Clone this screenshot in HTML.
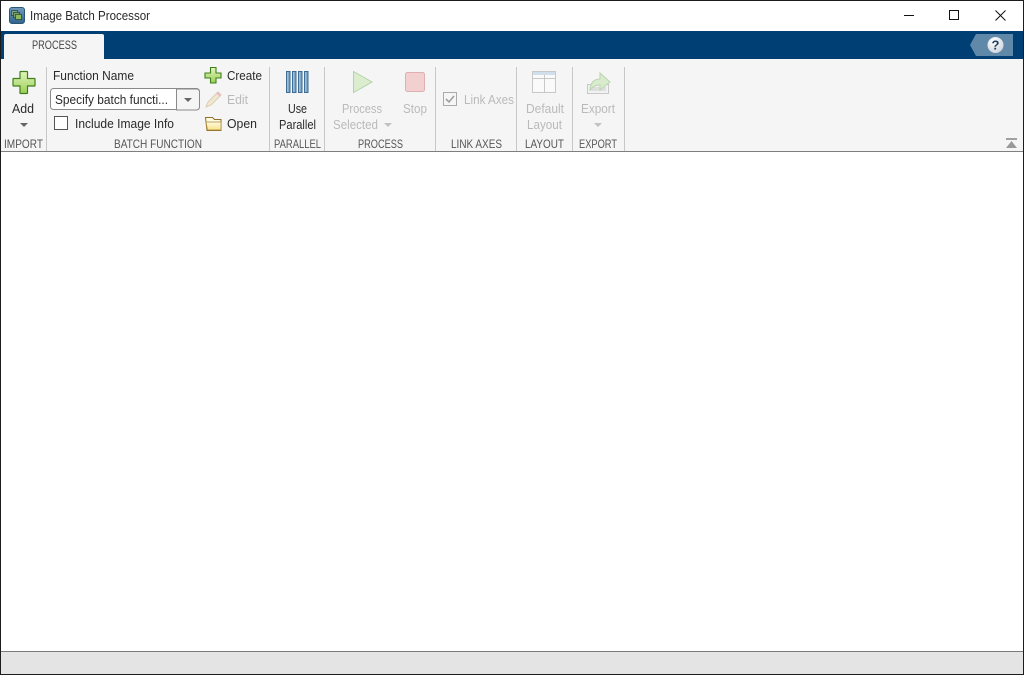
<!DOCTYPE html>
<html><head><meta charset="utf-8"><title>Image Batch Processor</title>
<style>
html,body{margin:0;padding:0;background:#fff;width:1024px;height:675px;overflow:hidden}
svg{display:block}
text{font-family:"Liberation Sans",sans-serif;font-size:12.5px;fill:#2a2a2a}
.d{fill:#bababa}
.g{fill:#555;font-size:12px}
</style></head><body>
<svg width="1024" height="675" viewBox="0 0 1024 675" xmlns="http://www.w3.org/2000/svg">
<defs>
<linearGradient id="gr" x1="0" y1="0" x2="0" y2="1"><stop offset="0" stop-color="#e2f4bd"/><stop offset="1" stop-color="#9ccf55"/></linearGradient>
<linearGradient id="bl" x1="0" y1="0" x2="1" y2="0"><stop offset="0" stop-color="#b4d0e6"/><stop offset="1" stop-color="#5d8fb8"/></linearGradient>
<linearGradient id="fo" x1="0" y1="0" x2="0" y2="1"><stop offset="0" stop-color="#fffbe0"/><stop offset="1" stop-color="#f8e28a"/></linearGradient>
<linearGradient id="ti" x1="0" y1="0" x2="0" y2="1"><stop offset="0" stop-color="#6f9bbd"/><stop offset="1" stop-color="#2f638c"/></linearGradient>
<radialGradient id="hp" cx=".4" cy=".3" r=".8"><stop offset="0" stop-color="#fff"/><stop offset="1" stop-color="#c9d2dc"/></radialGradient>
</defs>
<rect width="1024" height="675" fill="#fff"/>
<rect x="1" y="31" width="1022" height="28" fill="#003f73"/>
<path d="M4 36a2 2 0 0 1 2-2h96a2 2 0 0 1 2 2v23H4z" fill="#f5f5f5"/>
<rect x="1" y="59" width="1022" height="92" fill="#f5f5f5"/>
<rect x="1" y="151" width="1022" height="1" fill="#7f7f7f"/>
<rect x="1" y="652" width="1022" height="22" fill="#e4e4e4"/>
<rect x="1" y="651" width="1022" height="1" fill="#7a7a7a"/>
<rect x="0" y="0" width="1024" height="1" fill="#1c1c1c"/>
<rect x="0" y="0" width="1" height="675" fill="#1c1c1c"/>
<rect x="1023" y="0" width="1" height="675" fill="#1c1c1c"/>
<rect x="0" y="674" width="1024" height="1" fill="#1c1c1c"/>

<!-- title icon -->
<rect x="9.500" y="7.500" width="15" height="16" rx="2.500" fill="url(#ti)" stroke="#2a5576"/>
<rect x="11.500" y="10.500" width="6" height="5" fill="#7ea58f" stroke="#23402f" stroke-width=".7"/>
<rect x="13.500" y="12.500" width="6" height="5" fill="#7e9f6a" stroke="#23402f" stroke-width=".7"/>
<rect x="15.500" y="14.500" width="6" height="5" fill="#8fb85a" stroke="#23402f" stroke-width=".7"/>
<text x="30" y="20" textLength="120" lengthAdjust="spacingAndGlyphs" fill="#111">Image Batch Processor</text>

<!-- window controls -->
<rect x="904" y="15" width="10" height="1" fill="#111"/>
<rect x="949.500" y="10.500" width="9" height="9" fill="none" stroke="#111"/>
<path d="M995.500 10.500l10 10M1005.500 10.500l-10 10" stroke="#111" stroke-width="1" fill="none"/>

<!-- help -->
<path d="M976 34H1013V56H976L970 45z" fill="#6089a9"/>
<circle cx="995.500" cy="45" r="8" fill="url(#hp)"/>
<text x="995.500" y="49.500" text-anchor="middle" style="font-size:13px;font-weight:bold;fill:#1f3f60">?</text>

<text x="32" y="49" textLength="45" lengthAdjust="spacingAndGlyphs" style="font-size:12px;fill:#444">PROCESS</text>

<g fill="#c8c8c8">
<rect x="46" y="67" width="1" height="84"/><rect x="269" y="67" width="1" height="84"/><rect x="324" y="67" width="1" height="84"/><rect x="435" y="67" width="1" height="84"/><rect x="516" y="67" width="1" height="84"/><rect x="572" y="67" width="1" height="84"/><rect x="624" y="67" width="1" height="84"/>
</g>

<!-- Add -->
<path d="M20.500 71.500h6.500a.5.5 0 0 1 .5.5v6.500h7a.5.5 0 0 1 .5.5v6.500a.5.5 0 0 1-.5.5h-7v7a.5.5 0 0 1-.5.500h-6.500a.5.5 0 0 1-.5-.500v-7h-6.500a.5.5 0 0 1-.5-.5v-6.500a.5.5 0 0 1 .5-.5h6.500v-6.500a.5.5 0 0 1 .5-.5z" fill="url(#gr)" stroke="#3f7f1c" stroke-width="1.200"/>
<text x="12" y="113" textLength="22" lengthAdjust="spacingAndGlyphs">Add</text>
<path d="M20 123h8l-4 4z" fill="#666"/>

<!-- Batch function -->
<text x="53" y="80" textLength="81" lengthAdjust="spacingAndGlyphs">Function Name</text>
<rect x="50.500" y="88.500" width="149" height="21" rx="3" fill="#fff" stroke="#8a8a8a"/>
<path d="M176.500 89h20a3 3 0 0 1 3 3v15a3 3 0 0 1-3 3h-20z" fill="#f5f5f5" stroke="#8a8a8a"/>
<path d="M184 98h8l-4 4z" fill="#666"/>
<text x="55" y="104" textLength="113" lengthAdjust="spacingAndGlyphs">Specify batch functi...</text>
<rect x="54.500" y="116.500" width="13" height="13" fill="#fff" stroke="#555"/>
<text x="75" y="128" textLength="99" lengthAdjust="spacingAndGlyphs">Include Image Info</text>

<path d="M210.500 67.500h5.500v5.500h5v5h-5v5h-5.500v-5h-5.500v-5h5.500z" fill="url(#gr)" stroke="#3f7f1c" stroke-width="1.100"/>
<text x="227" y="80" textLength="35" lengthAdjust="spacingAndGlyphs">Create</text>
<path d="M206 107l2-5 10-10 3 3-10 10z" fill="#f2e8d0" stroke="#d8ccb0"/>
<path d="M216.500 93.500l1.500-1.500 3 3-1.500 1.500z" fill="#f0b8c8"/>
<text x="227" y="104" textLength="21" lengthAdjust="spacingAndGlyphs" class="d">Edit</text>
<path d="M205.500 117.500h7l2 2h6.500v11h-14z" fill="#fffbe0" stroke="#8f6f2a"/>
<path d="M206 122h15v8h-13.500z" fill="url(#fo)" stroke="#a8863a" stroke-width=".7"/>
<text x="227" y="128" textLength="30" lengthAdjust="spacingAndGlyphs">Open</text>

<!-- Parallel -->
<g stroke="#3f6d94" fill="url(#bl)">
<rect x="286.500" y="71.500" width="3.500" height="21"/><rect x="292.500" y="71.500" width="3.500" height="21"/><rect x="298.500" y="71.500" width="3.500" height="21"/><rect x="304.500" y="71.500" width="3.500" height="21"/>
</g>
<text x="288" y="113" textLength="19" lengthAdjust="spacingAndGlyphs">Use</text>
<text x="279" y="129" textLength="37" lengthAdjust="spacingAndGlyphs">Parallel</text>

<!-- Process -->
<path d="M353.500 71.500l18.500 10.500-18.500 10.500z" fill="#dcedcf" stroke="#b0d4a4"/>
<text x="342" y="113" textLength="40" lengthAdjust="spacingAndGlyphs" class="d">Process</text>
<text x="333" y="129" textLength="45" lengthAdjust="spacingAndGlyphs" class="d">Selected</text>
<path d="M384 123h8l-4 4z" fill="#c2c2c2"/>
<rect x="405.500" y="72.500" width="19" height="19" rx="2" fill="#f3d0d0" stroke="#deb0b0"/>
<text x="403" y="113" textLength="24" lengthAdjust="spacingAndGlyphs" class="d">Stop</text>

<!-- Link axes -->
<rect x="443.500" y="92.500" width="13" height="13" fill="#f5f5f5" stroke="#aaa"/>
<path d="M446 99l3 3 5-6" fill="none" stroke="#a0a0a0" stroke-width="1.600"/>
<text x="464" y="104" textLength="50" lengthAdjust="spacingAndGlyphs" class="d">Link Axes</text>

<!-- Layout -->
<rect x="532.500" y="71.500" width="23" height="21" fill="#fafafa" stroke="#c8c8c8"/>
<rect x="533" y="72" width="22" height="3" fill="#d0dfeb"/>
<path d="M533 78.500h22M544.500 75v17" stroke="#c8c8c8" fill="none"/>
<text x="526" y="113" textLength="38" lengthAdjust="spacingAndGlyphs" class="d">Default</text>
<text x="527" y="129" textLength="35" lengthAdjust="spacingAndGlyphs" class="d">Layout</text>

<!-- Export -->
<rect x="587.500" y="84.500" width="21" height="9" fill="#f2f2f2" stroke="#c8c8c8"/>
<rect x="590" y="87" width="16" height="4" fill="#dedede"/>
<path d="M590 90c0-7 4-11 10-11v-6l10 9-10 8v-5c-4 0-7 1-10 5z" fill="#d8ebcd" stroke="#bad4ae"/>
<text x="581" y="113" textLength="34" lengthAdjust="spacingAndGlyphs" class="d">Export</text>
<path d="M594 123h8l-4 4z" fill="#c2c2c2"/>

<!-- group labels -->
<text class="g" x="4" y="148" textLength="39" lengthAdjust="spacingAndGlyphs">IMPORT</text>
<text class="g" x="114" y="148" textLength="88" lengthAdjust="spacingAndGlyphs">BATCH FUNCTION</text>
<text class="g" x="274" y="148" textLength="47" lengthAdjust="spacingAndGlyphs">PARALLEL</text>
<text class="g" x="358" y="148" textLength="45" lengthAdjust="spacingAndGlyphs">PROCESS</text>
<text class="g" x="451" y="148" textLength="51" lengthAdjust="spacingAndGlyphs">LINK AXES</text>
<text class="g" x="525" y="148" textLength="39" lengthAdjust="spacingAndGlyphs">LAYOUT</text>
<text class="g" x="579" y="148" textLength="38" lengthAdjust="spacingAndGlyphs">EXPORT</text>

<!-- collapse -->
<rect x="1006" y="138" width="11" height="2" fill="#a0a0a0"/>
<path d="M1011.500 141l5.500 7h-11z" fill="#999"/>
</svg>
</body></html>
